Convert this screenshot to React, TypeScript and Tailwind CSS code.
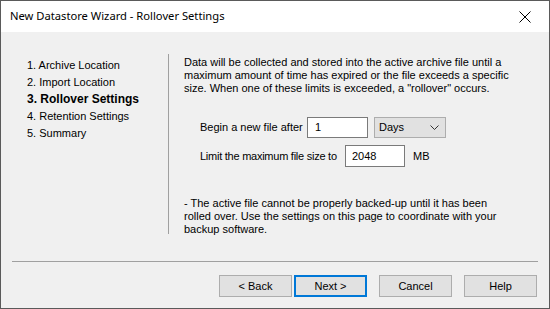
import React from "react";

const btn =
  "h-[22px] w-[73px] bg-[#e1e1e1] border border-[#adadad] flex items-center justify-center text-[11px] text-black";

export default function App() {
  return (
    <div
      className="w-[550px] h-[309px] border border-[#5a5a5a] bg-[#f0f0f0] flex flex-col text-black overflow-hidden"
      style={{ fontFamily: '"Liberation Sans", Arial, sans-serif' }}
    >
      {/* Title bar */}
      <div className="h-[31px] bg-white flex items-center justify-between pl-[9px] pr-[18px] shrink-0">
        <span
          className="text-[11.2px] text-black"
          style={{ fontFamily: '"Noto Sans", "Open Sans", sans-serif' }}
        >
          New Datastore Wizard - Rollover Settings
        </span>
        <svg width="12" height="12" viewBox="0 0 12 12" className="mt-[1px]">
          <path d="M0.5 0.5 L11.5 11.5 M11.5 0.5 L0.5 11.5" stroke="#000" strokeWidth="1" />
        </svg>
      </div>

      {/* Main area */}
      <div className="flex h-[229px] shrink-0">
        {/* Left nav */}
        <div className="w-[167px] pl-[26px] pt-[25px] text-[11px] leading-[17px]">
          <div>1. Archive Location</div>
          <div>2. Import Location</div>
          <div className="font-bold text-[12px]">3. Rollover Settings</div>
          <div>4. Retention Settings</div>
          <div>5. Summary</div>
        </div>
        {/* Separator */}
        <div className="w-px h-[180px] mt-[22px] bg-[#a0a0a0]" />
        {/* Right content */}
        <div className="flex-1 pl-[15px] pt-[24px] text-[11px] leading-[13px]">
          <p>
            Data will be collected and stored into the active archive file until a
            <br />
            maximum amount of time has expired or the file exceeds a specific
            <br />
            size. When one of these limits is exceeded, a "rollover" occurs.
          </p>
          <div className="flex items-center mt-[22px] pl-[16px] h-[21px]">
            <span className="w-[107px]">Begin a new file after</span>
            <div className="w-[61px] h-[21px] bg-white border border-[#7a7a7a] flex items-center pl-[7px]">
              1
            </div>
            <div className="ml-[6px] w-[72px] h-[21px] bg-[#e1e1e1] border border-[#adadad] flex items-center justify-between pl-[4px] pr-[6px]">
              <span>Days</span>
              <svg width="9" height="6" viewBox="0 0 9 6">
                <path d="M0.5 0.5 L4.5 4.5 L8.5 0.5" stroke="#333" strokeWidth="1" fill="none" />
              </svg>
            </div>
          </div>
          <div className="flex items-center mt-[7px] pl-[16px] h-[22px]">
            <span className="w-[145px] whitespace-nowrap tracking-[-0.25px]">
              Limit the maximum file size to
            </span>
            <div className="w-[60px] h-[22px] bg-white border border-[#7a7a7a] flex items-center pl-[6px]">
              2048
            </div>
            <span className="ml-[8px]">MB</span>
          </div>
          <p className="mt-[30px]">
            - The active file cannot be properly backed-up until it has been
            <br />
            rolled over. Use the settings on this page to coordinate with your
            <br />
            backup software.
          </p>
        </div>
      </div>

      {/* Horizontal separator */}
      <div className="mx-[11px] h-px bg-[#a0a0a0] shrink-0" />

      {/* Buttons */}
      <div className="flex justify-end pr-[12px] pt-[13px]">
        <div className={btn}>&lt; Back</div>
        <div className="ml-[2px] h-[22px] w-[73px] bg-[#e1e1e1] border-2 border-[#0078d7] flex items-center justify-center text-[11px]">
          Next &gt;
        </div>
        <div className={btn + " ml-[12px]"}>Cancel</div>
        <div className={btn + " ml-[12px]"}>Help</div>
      </div>
    </div>
  );
}
